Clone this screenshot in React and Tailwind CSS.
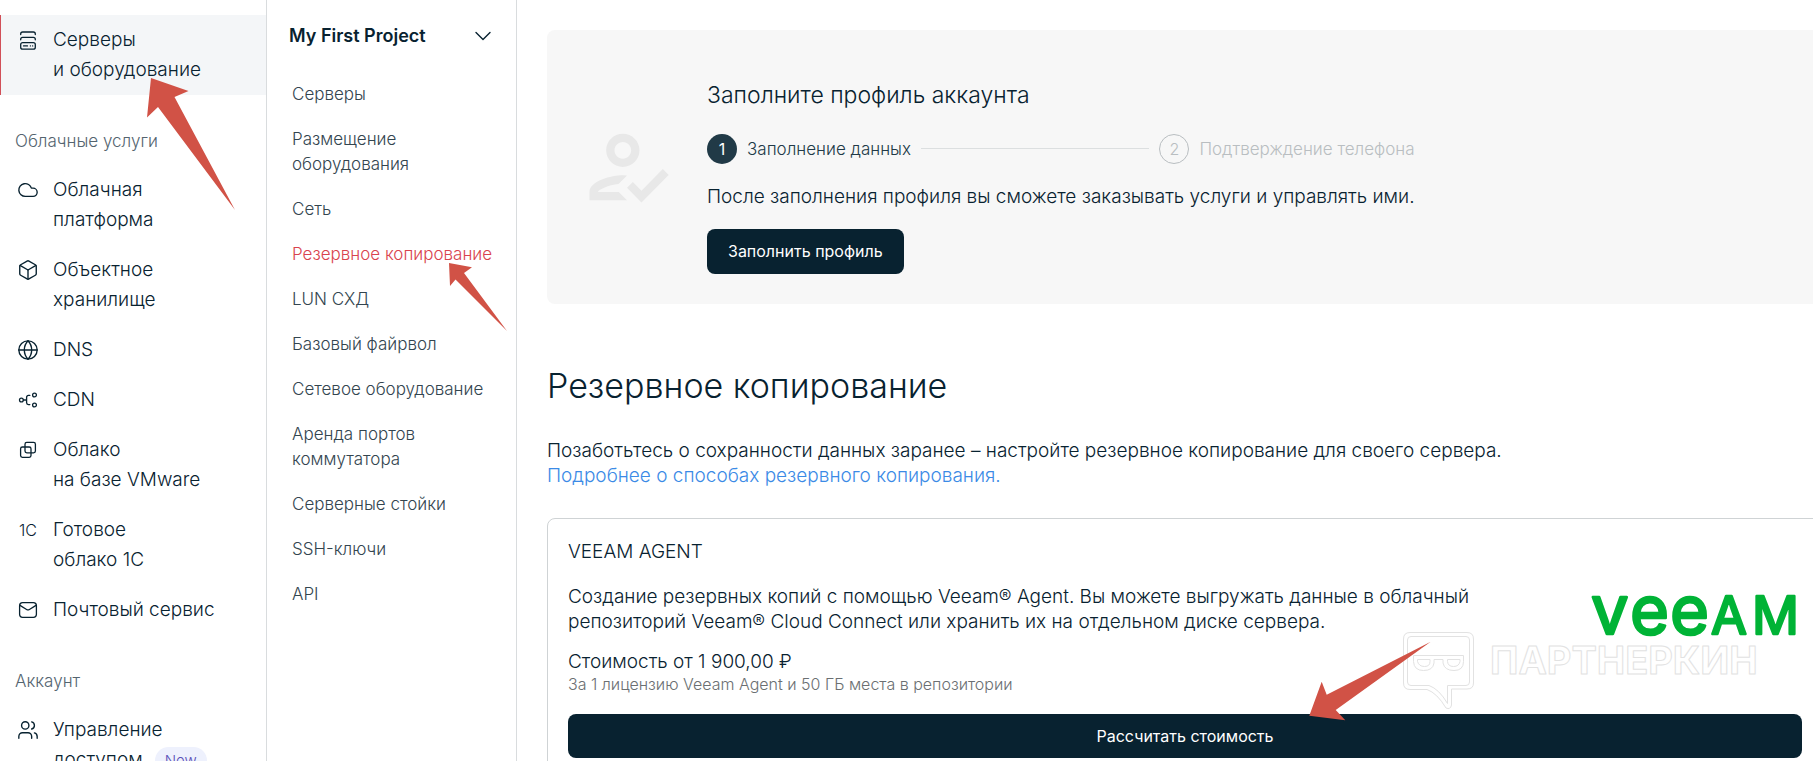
import { Box, ChevronDown, Cloud, Globe, Users } from 'lucide-react';
import { MdOutlineHowToReg } from 'react-icons/md';

// Shared wrapper for the hand drawn sidebar icons, origin is in the centre
const Icon = ({ children }) => (
  <svg
    viewBox="-11 -11 22 22"
    className="w-[22px] h-[22px]"
    fill="none"
    stroke="currentColor"
    strokeWidth="1.3"
    strokeLinecap="round"
    strokeLinejoin="round"
    aria-hidden="true"
  >
    {children}
  </svg>
);

const ServersIcon = () => (
  <Icon>
    <path d="M-7.3 -5.5v-.5a2 2 0 0 1 2-2h10.600a2 2 0 0 1 2 2v.5" />
    <path d="M-7.3 -.2v-.5a2 2 0 0 1 2-2h10.600a2 2 0 0 1 2 2v.5" />
    <rect x="-7.3" y="2.6" width="14.6" height="6.6" rx="2" />
    <path d="M-4.5 5.9h4M2.4 5.9h.1M4.6 5.9h.1" />
  </Icon>
);

const CdnIcon = () => (
  <Icon>
    <circle cx="-6.6" cy="0" r="1.9" />
    <circle cx="6.5" cy="-5" r="1.9" />
    <circle cx="6.5" cy="5" r="1.9" />
    <path d="M-4.6 0h3.2M1.8 -4.6h-1.4a1.8 1.8 0 0 0 -1.8 1.8v5.6a1.8 1.8 0 0 0 1.8 1.8h1.4" />
  </Icon>
);

const VmwareIcon = () => (
  <Icon>
    <rect x="-3" y="-7.6" width="10.4" height="10.4" rx="1.8" />
    <rect x="-7.4" y="-3" width="10.4" height="10.4" rx="1.8" />
  </Icon>
);

const MailIcon = () => (
  <Icon>
    <rect x="-8.4" y="-7.3" width="16.8" height="14.6" rx="3" />
    <path d="M-8 -4.6l6.6 4.1a2.6 2.6 0 0 0 2.8 0l6.6 -4.1" />
  </Icon>
);

const cloudItems = [
  { icon: <Cloud size={22} strokeWidth={1.5} />, lines: ['Облачная', 'платформа'] },
  { icon: <Box size={22} strokeWidth={1.5} />, lines: ['Объектное', 'хранилище'] },
  { icon: <Globe size={22} strokeWidth={1.5} />, lines: ['DNS'] },
  { icon: <CdnIcon />, lines: ['CDN'] },
  { icon: <VmwareIcon />, lines: ['Облако', 'на базе VMware'] },
  { icon: <span className="text-base">1С</span>, lines: ['Готовое', 'облако 1С'] },
  { icon: <MailIcon />, lines: ['Почтовый сервис'] },
];

const projectLinks = [
  ['Серверы'],
  ['Размещение', 'оборудования'],
  ['Сеть'],
  ['Резервное копирование'],
  ['LUN СХД'],
  ['Базовый файрвол'],
  ['Сетевое оборудование'],
  ['Аренда портов', 'коммутатора'],
  ['Серверные стойки'],
  ['SSH-ключи'],
  ['API'],
];

const activeLink = 'Резервное копирование';

const SidebarItem = ({ icon, lines, active, badge }) => (
  <a
    href="#"
    className={
      active
        ? 'flex gap-[13px] py-[10px] pl-[15px] bg-[#f4f6f8] border-l border-[#d15058]'
        : 'flex gap-[13px] py-[10px] pl-4'
    }
  >
    <span className="w-6 h-[30px] shrink-0 flex items-center justify-center">{icon}</span>
    <span className="text-[19px] leading-[30px]">
      {lines.map((line, i) => (
        <span key={line} className="block whitespace-nowrap">
          {line}
          {badge && i === lines.length - 1 && (
            <span className="ml-3 px-[10px] py-1 rounded-full bg-[#eef1fd] text-[#5a50b8] text-[15px]">
              {badge}
            </span>
          )}
        </span>
      ))}
    </span>
  </a>
);

const SidebarTitle = ({ children }) => (
  <h3 className="pt-[34px] pb-3 pl-[15px] text-[17px] leading-6 text-[#54646f]">{children}</h3>
);

const Sidebar = () => (
  <nav className="w-[267px] shrink-0 pt-[15px] border-r border-[#d9dcde]">
    <SidebarItem icon={<ServersIcon />} lines={['Серверы', 'и оборудование']} active />
    <SidebarTitle>Облачные услуги</SidebarTitle>
    {cloudItems.map((item) => (
      <SidebarItem key={item.lines[0]} icon={item.icon} lines={item.lines} />
    ))}
    <SidebarTitle>Аккаунт</SidebarTitle>
    <SidebarItem
      icon={<Users size={22} strokeWidth={1.5} />}
      lines={['Управление', 'доступом']}
      badge="New"
    />
  </nav>
);

const ProjectMenu = () => (
  <nav className="w-[250px] shrink-0 border-r border-[#d9dcde]">
    <button className="w-full flex items-center justify-between pt-5 pb-[10px] pl-[22px] pr-[19px] text-lg leading-8 font-semibold">
      My First Project
      <ChevronDown size={28} strokeWidth={1.2} />
    </button>
    <ul className="pt-[10px]">
      {projectLinks.map((lines) => (
        <li key={lines[0]} className="py-[10px] pl-[25px] text-[17px] leading-[25px]">
          <a href="#" className={lines[0] === activeLink ? 'text-[#d9434e]' : 'text-[#33454f]'}>
            {lines.map((line) => (
              <span key={line} className="block whitespace-nowrap">{line}</span>
            ))}
          </a>
        </li>
      ))}
    </ul>
  </nav>
);

// Grey banner that asks to complete the account profile
const ProfileBanner = () => (
  <section className="flex items-center gap-[30px] h-[274px] pl-[30px] rounded-lg bg-[#f7f7f7]">
    <MdOutlineHowToReg size={100} className="shrink-0 text-[#e8e8e8]" />
    <div className="pt-[18px]">
      <h2 className="text-[23px] leading-8 mb-[23px]">Заполните профиль аккаунта</h2>
      <div className="flex items-center text-[17px] leading-[30px] mb-5">
        <span className="w-[30px] h-[30px] rounded-full bg-[#213a47] text-white text-base leading-[30px] text-center font-normal">
          1
        </span>
        <span className="ml-[10px] text-[#213a47]">Заполнение данных</span>
        <span className="flex-1 h-px mx-[10px] bg-[#dcdfe0]" />
        <span className="w-[30px] h-[30px] rounded-full border border-[#b9bec1] text-[#b9bec1] text-base leading-7 text-center">
          2
        </span>
        <span className="ml-[10px] text-[#b9bec1]">Подтверждение телефона</span>
      </div>
      <p className="text-[19px] leading-[25px] mb-5">
        После заполнения профиля вы сможете заказывать услуги и управлять ими.
      </p>
      <button className="h-[45px] px-[21px] rounded-lg bg-[#082230] text-white text-base font-normal">
        Заполнить профиль
      </button>
    </div>
  </section>
);

const VeeamLogo = () => (
  <svg
    viewBox="0 0 212 40"
    className="w-[212px] h-10 overflow-visible font-normal"
    fill="#00b336"
    stroke="#00b336"
    strokeWidth="2.4"
    strokeLinejoin="round"
    role="img"
    aria-label="Veeam"
  >
    <text y="38" fontSize="67">
      <tspan x="1 40 80">vee</tspan>
      <tspan x="121 162" fontSize="52">AM</tspan>
    </text>
  </svg>
);

const AgentCard = () => (
  <section className="mt-[30px] p-5 border border-[#cfd3d5] rounded-lg">
    <h2 className="text-[19px] leading-[25px] mb-5">VEEAM AGENT</h2>
    <div className="flex justify-between pb-5">
      <div>
        <p className="text-[19px] leading-[25px] mb-[15px]">
          Создание резервных копий с помощью Veeam® Agent. Вы можете выгружать данные в облачный
          <br />
          репозиторий Veeam® Cloud Connect или хранить их на отдельном диске сервера.
        </p>
        <p className="text-[19px] leading-[25px]">Стоимость от 1 900,00 ₽</p>
        <p className="text-base leading-5 text-[#6b6f72]">
          За 1 лицензию Veeam Agent и 50 ГБ места в репозитории
        </p>
      </div>
      <div className="pt-3 shrink-0">
        <VeeamLogo />
      </div>
    </div>
    <button className="w-full h-11 rounded-lg bg-[#082230] text-white text-base font-normal">
      Рассчитать стоимость
    </button>
  </section>
);

// Outlined brand mark lying over the page
const Watermark = () => (
  <svg
    viewBox="0 0 360 80"
    className="absolute left-[1402px] top-[631px] w-[360px] h-20 pointer-events-none"
    fill="none"
    stroke="#e2e2e2"
    strokeWidth="1"
    strokeLinejoin="round"
    aria-hidden="true"
  >
    <path d="M8 1.500h57q6.500 0 6.500 6.500v44q0 6-6.500 6H49.500v16q-1 5-5.500 3Q35 62 25 58.500H8q-6.500 0-6.500-6.500V8q0-6.500 6.500-6.500z" />
    <path d="M9 5.500h55q3.500 0 3.500 3.500v42q0 3.500-3.500 3.500H45.500v18Q37 58 27 54.500H9q-3.500 0-3.500-3.500V9q0-3.500 3.500-3.500z" />
    <path d="M11.500 24.500h50v6q0 9-9.500 9T41 32v-3.500h-9V32q-1 7.500-10.500 7.500t-10-9z" />
    <path d="M15.500 28.500h12.500v2q0 5-5.500 5t-7-5zM45.500 28.500H58v2q-1 5-6.500 5t-6-5z" />
    <text x="88" y="43" fontSize="38" className="font-bold">ПАРТНЕРКИН</text>
  </svg>
);

// Red pointers over the page
const Arrows = () => (
  <>
    <svg
      viewBox="0 0 92 134"
      className="absolute left-[146px] top-[77px] w-[92px] h-[134px] pointer-events-none"
      fill="#d15246"
      aria-hidden="true"
    >
      <path d="M5 1L42.500 14L28.500 20L89 133L12 30L1 40.500z" />
    </svg>
    <svg
      viewBox="0 0 60 70"
      className="absolute left-[448px] top-[262px] w-[60px] h-[70px] pointer-events-none"
      fill="#d15246"
      aria-hidden="true"
    >
      <path d="M1 1L24 5.300L16 11L59 69L7.500 17.500L2 24z" />
    </svg>
    <svg
      viewBox="0 0 124 82"
      className="absolute left-[1308px] top-[640px] w-[124px] h-[82px] pointer-events-none"
      fill="#d15246"
      aria-hidden="true"
    >
      <path d="M1.300 75.700L13.700 41.700L18.700 54.700L122.700 1.700L27.700 70L37.300 80.300z" />
    </svg>
  </>
);

const App = () => {
  return (
    <div className="relative flex h-screen overflow-hidden bg-white text-[#082230] font-light font-['Inter','Noto_Sans',sans-serif]">
      <Sidebar />
      <ProjectMenu />
      {/* Content runs slightly past the right edge of the window */}
      <main className="flex-1 min-w-0 pt-[30px] pl-[30px] -mr-[10px]">
        <ProfileBanner />
        <h1 className="mt-[58px] text-[34px] leading-[48px]">Резервное копирование</h1>
        <p className="mt-7 text-[19px] leading-[25px]">
          Позаботьтесь о сохранности данных заранее – настройте резервное копирование для своего сервера.
          <br />
          <a href="#" className="text-[#3b8ae6]">Подробнее о способах резервного копирования.</a>
        </p>
        <AgentCard />
      </main>
      <Watermark />
      <Arrows />
    </div>
  );
};

export default App;
